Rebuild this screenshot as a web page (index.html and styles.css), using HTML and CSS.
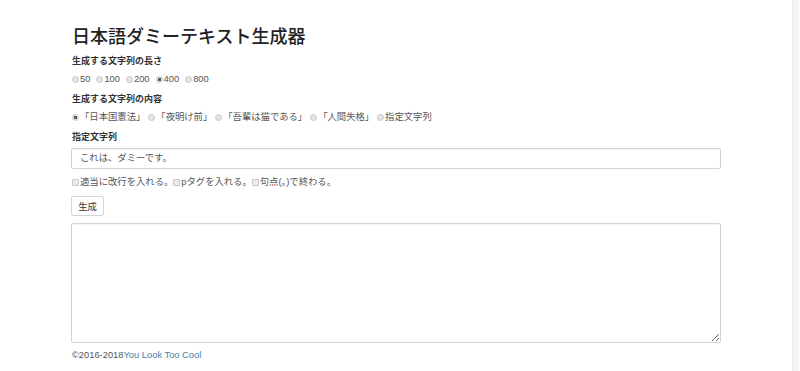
FILE: index.html
```html
<!DOCTYPE html>
<html>
  <head>
    <meta charset="UTF-8" />
    <title>日本語ダミーテキスト生成器</title>
    <link rel="stylesheet" href="styles.css">
  </head>
  <body>
    <div class="container">
      <h1>日本語ダミーテキスト生成器</h1>

      <div class="field-label">生成する文字列の長さ</div>
      <div class="options options-length">
        <label class="option"><span class="radio"></span>50</label>
        <label class="option"><span class="radio"></span>100</label>
        <label class="option"><span class="radio"></span>200</label>
        <label class="option"><span class="radio checked"></span>400</label>
        <label class="option"><span class="radio"></span>800</label>
      </div>

      <div class="field-label">生成する文字列の内容</div>
      <div class="options options-source">
        <label class="option"><span class="radio checked"></span>「日本国憲法」</label>
        <label class="option"><span class="radio"></span>「夜明け前」</label>
        <label class="option"><span class="radio"></span>「吾輩は猫である」</label>
        <label class="option"><span class="radio"></span>「人間失格」</label>
        <label class="option"><span class="radio"></span>指定文字列</label>
      </div>

      <div class="field-label">指定文字列</div>
      <div class="text-input">これは、ダミーです。</div>

      <div class="options options-check">
        <label class="option"><span class="checkbox"></span>適当に改行を入れる。</label>
        <label class="option"><span class="checkbox"></span>pタグを入れる。</label>
        <label class="option"><span class="checkbox"></span>句点(。)で終わる。</label>
      </div>

      <button class="btn">生成</button>

      <textarea class="output"></textarea>

      <div class="footer">©2016-2018<a href="#">You Look Too Cool</a></div>
    </div>
    <div class="scroll-track"></div>
  </body>
</html>
```

FILE: styles.css
```css
body {
  margin: 0;
  background: #fff;
  color: #333;
  font-family: "Liberation Sans", "Noto Sans CJK JP", sans-serif;
  font-size: 9.33px;
}

.container {
  width: 650px;
  margin-left: 71px;
  padding-top: 27px;
}

h1 {
  margin: 0;
  font-size: 18px;
  line-height: 20px;
  font-weight: 500;
  color: #222;
  padding-left: 1px;
}

.field-label {
  margin-top: 8px;
  padding-left: 1px;
  font-size: 9px;
  line-height: 13px;
  font-weight: 700;
  color: #333;
}

.options {
  display: flex;
  align-items: center;
  margin-top: 5px;
  padding-left: 1px;
  line-height: 13px;
  color: #555;
}

.options + .field-label {
  margin-top: 7px;
}

.options-length {
  gap: 6px;
}

.options-source {
  gap: 3px;
}

.options-check {
  gap: 0;
  margin-top: 7px;
}

.option {
  display: flex;
  align-items: center;
}

.radio {
  width: 5px;
  height: 5px;
  margin-right: 1px;
  border: 1px solid #c8c8c8;
  border-radius: 50%;
  background: #e6e6e6;
}

.radio.checked {
  background: radial-gradient(circle, #555 0 1.4px, #e6e6e6 2px);
}

.checkbox {
  width: 5px;
  height: 5px;
  margin-right: 1px;
  border: 1px solid #c8c8c8;
  border-radius: 1px;
  background: #ececec;
}

.text-input {
  box-sizing: border-box;
  height: 21px;
  margin-top: 4px;
  padding: 0 8px;
  border: 1px solid #d4d4d4;
  border-radius: 2px;
  box-shadow: inset 0 1px 1px rgba(0, 0, 0, 0.05);
  line-height: 19px;
  color: #555;
}

.btn {
  display: block;
  box-sizing: border-box;
  width: 33px;
  height: 20px;
  margin-top: 7px;
  padding: 0;
  border: 1px solid #d6d6d6;
  border-radius: 2px;
  background: #fff;
  font-family: inherit;
  font-size: 9.33px;
  color: #333;
}

.output {
  display: block;
  box-sizing: border-box;
  width: 650px;
  height: 120px;
  margin: 7px 0 0;
  border: 1px solid #d4d4d4;
  border-radius: 2px;
  box-shadow: inset 0 1px 1px rgba(0, 0, 0, 0.05);
  background: #fff;
}

.footer {
  margin-top: 6px;
  padding-left: 1px;
  line-height: 13px;
  color: #555;
}

.footer a {
  color: #4a7eab;
  text-decoration: none;
}

.scroll-track {
  position: fixed;
  top: 0;
  right: 1px;
  bottom: 0;
  width: 6px;
  background: #f4f4f4;
  border-left: 1px solid #ededed;
}
```
